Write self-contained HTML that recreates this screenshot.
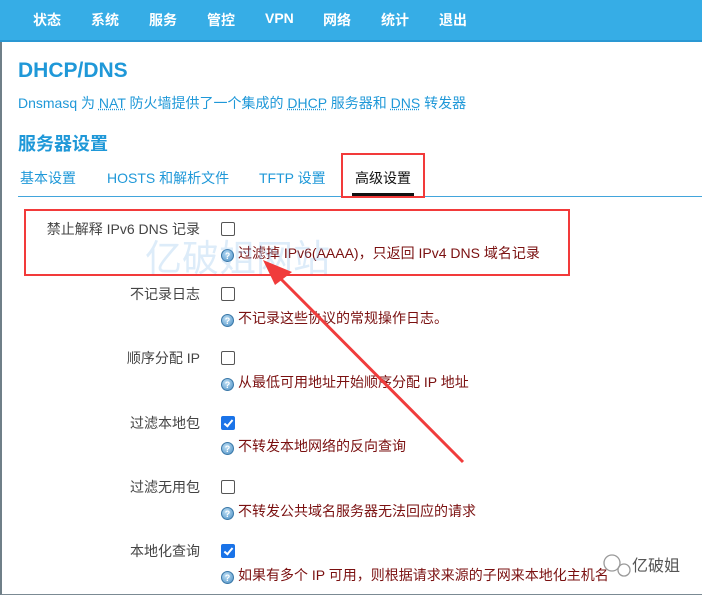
<!DOCTYPE html>
<html><head><meta charset="utf-8"><style>
body{margin:0;width:702px;height:595px;overflow:hidden;background:#fff;font-family:"Liberation Sans","Noto Sans CJK SC",sans-serif;position:relative}
.frame{position:absolute;left:0;top:0;width:700px;height:593px;border:1px solid #7b8a93;border-left:2px solid #6f7f88}
.nav{position:absolute;left:0;top:0;width:702px;height:40px;background:#36ade6;border-bottom:2px solid #2a98d3}
.nav span{position:absolute;top:10px;color:#fff;font-size:14px;font-weight:bold}
.t{position:absolute;white-space:nowrap}
.lbl{position:absolute;right:502px;font-size:14px;color:#444;white-space:nowrap}
.cb{position:absolute;left:221px;width:12px;height:12px;border:1px solid #555;border-radius:2px;background:#fff}
.cb.on{background:#1a73e8;border-color:#1a73e8}
.cb.on:after{content:"";position:absolute;left:4px;top:1px;width:3px;height:7px;border:solid #fff;border-width:0 2px 2px 0;transform:rotate(40deg)}
.help{position:absolute;left:221px;font-size:14px;color:#7a1010;white-space:nowrap}
.q{display:inline-block;width:13px;height:13px;border-radius:50%;background:radial-gradient(circle at 40% 35%,#bfe0f5,#4a8ec4);color:#fff;font-size:9px;font-weight:bold;text-align:center;line-height:12px;vertical-align:-1px;margin-right:4px;border:1px solid #3a78a8;box-sizing:border-box}
u{text-decoration:underline dotted}
</style></head><body>
<div class="frame"></div>
<div class="nav">
<span style="left:33px">状态</span><span style="left:91px">系统</span><span style="left:149px">服务</span><span style="left:207px">管控</span><span style="left:265px">VPN</span><span style="left:323px">网络</span><span style="left:381px">统计</span><span style="left:439px">退出</span>
</div>
<div class="t" style="left:18px;top:59px;font-size:21px;font-weight:bold;color:#1f98d8">DHCP/DNS</div>
<div class="t" style="left:18px;top:93px;font-size:14px;color:#1f98d8">Dnsmasq 为 <u>NAT</u> 防火墙提供了一个集成的 <u>DHCP</u> 服务器和 <u>DNS</u> 转发器</div>
<div class="t" style="left:18px;top:130px;font-size:18px;font-weight:bold;color:#1f98d8">服务器设置</div>
<div class="t" style="left:20px;top:168px;font-size:14px;color:#1f98d8">基本设置</div>
<div class="t" style="left:107px;top:168px;font-size:14px;color:#1f98d8">HOSTS 和解析文件</div>
<div class="t" style="left:259px;top:168px;font-size:14px;color:#1f98d8">TFTP 设置</div>
<div class="t" style="left:355px;top:168px;font-size:14px;color:#111">高级设置</div>
<div style="position:absolute;left:18px;top:196px;width:684px;height:1px;background:#42a5dc"></div>
<div style="position:absolute;left:352px;top:193px;width:62px;height:3px;background:#111"></div>
<div style="position:absolute;left:341px;top:153px;width:80px;height:41px;border:2px solid #f23a3a"></div>

<div class="lbl" style="top:219px">禁止解释 IPv6 DNS 记录</div><div class="cb" style="top:222px"></div>
<div class="help" style="top:243px"><span class="q">?</span>过滤掉 IPv6(AAAA)，只返回 IPv4 DNS 域名记录</div>
<div class="lbl" style="top:284px">不记录日志</div><div class="cb" style="top:287px"></div>
<div class="help" style="top:308px"><span class="q">?</span>不记录这些协议的常规操作日志。</div>
<div class="lbl" style="top:348px">顺序分配 IP</div><div class="cb" style="top:351px"></div>
<div class="help" style="top:372px"><span class="q">?</span>从最低可用地址开始顺序分配 IP 地址</div>
<div class="lbl" style="top:413px">过滤本地包</div><div class="cb on" style="top:416px"></div>
<div class="help" style="top:436px"><span class="q">?</span>不转发本地网络的反向查询</div>
<div class="lbl" style="top:477px">过滤无用包</div><div class="cb" style="top:480px"></div>
<div class="help" style="top:501px"><span class="q">?</span>不转发公共域名服务器无法回应的请求</div>
<div class="lbl" style="top:541px">本地化查询</div><div class="cb on" style="top:544px"></div>
<div class="help" style="top:565px"><span class="q">?</span>如果有多个 IP 可用，则根据请求来源的子网来本地化主机名</div>

<div class="t" style="left:145px;top:228px;font-size:37px;color:rgba(120,180,230,0.25)">亿破姐网站</div>
<div style="position:absolute;left:24px;top:209px;width:542px;height:63px;border:2px solid #f23a3a"></div>
<svg style="position:absolute;left:0;top:0" width="702" height="595">
<line x1="463" y1="462" x2="272" y2="270" stroke="#f03c3c" stroke-width="3"/>
<polygon points="263,260 292,272 275,285" fill="#f03c3c"/>
<g fill="none" stroke="#999" stroke-width="1.3"><circle cx="612" cy="563" r="8"/><circle cx="624" cy="570" r="6"/></g>
</svg>
<div class="t" style="left:632px;top:552px;font-size:16px;color:#555">亿破姐</div>
</body></html>
